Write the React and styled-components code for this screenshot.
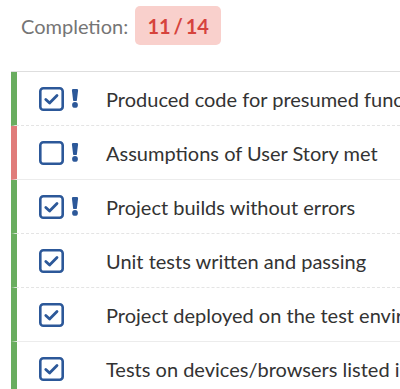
import styled, { createGlobalStyle } from 'styled-components'

const GlobalStyle = createGlobalStyle`
body {
  margin: 0;
  background: #fff;
  font-family: Lato, "Open Sans", sans-serif;
  overflow: hidden;
}
`

const items = [
  { text: 'Produced code for presumed functionality', done: true, flag: true, state: 'ok', dashed: true },
  { text: 'Assumptions of User Story met', done: false, flag: true, state: 'bad', dashed: false },
  { text: 'Project builds without errors', done: true, flag: true, state: 'ok', dashed: true },
  { text: 'Unit tests written and passing', done: true, flag: false, state: 'ok', dashed: true },
  { text: 'Project deployed on the test environment', done: true, flag: false, state: 'ok', dashed: false },
  { text: 'Tests on devices/browsers listed in the story', done: true, flag: false, state: 'ok', dashed: true },
]

function CheckBox({ checked }) {
  return (
    <svg width="25" height="24" viewBox="0 0 25 24">
      <rect x="1.3" y="1.3" width="22.4" height="21.4" rx="3" fill="none" stroke="#2c5899" strokeWidth="2.6" />
      {checked && <path d="M6.8 12.4 L10.6 16 L18 8.4" fill="none" stroke="#2c5899" strokeWidth="2.8" strokeLinecap="round" strokeLinejoin="round" />}
    </svg>
  )
}

function Bang() {
  return (
    <svg width="8" height="19" viewBox="0 0 8 19">
      <path d="M0.9 1.3 Q0.9 0 2.2 0 L5.8 0 Q7.1 0 7.1 1.3 L5.9 11.2 Q5.8 12.1 4.9 12.1 L3.1 12.1 Q2.2 12.1 2.1 11.2 Z" fill="#2c5899" />
      <circle cx="4" cy="15.9" r="2.9" fill="#2c5899" />
    </svg>
  )
}

export default function App() {
  return (
    <>
      <GlobalStyle />
      <Header>
        <Label>Completion:</Label>
        <Badge>11 / 14</Badge>
      </Header>
      <List>
        {items.map((item, i) => (
          <Row key={i} $state={item.state} $dashed={item.dashed}>
            <Icons>
              <CheckBox checked={item.done} />
              {item.flag && <Bang />}
            </Icons>
            <ItemText>{item.text}</ItemText>
          </Row>
        ))}
      </List>
    </>
  )
}

const Header = styled.div`
display: flex;
align-items: center;
gap: 7px;
padding: 6px 0 0 21px;
`

const Label = styled.span`
font-size: 20px;
color: #757575;
`

const Badge = styled.span`
display: inline-flex;
align-items: center;
justify-content: center;
width: 86px;
height: 39px;
border-radius: 5px;
background: #f9d0cc;
color: #d6433c;
font-size: 20px;
font-weight: 700;
word-spacing: -2px;
`

const List = styled.div`
margin: 26px 0 0 11px;
border-top: 1px solid #dedede;
overflow: hidden;
`

const Row = styled.div`
display: flex;
align-items: center;
height: 53px;
border-left: 6px solid ${p => (p.$state === 'bad' ? '#e07c7a' : '#69ad5f')};
border-bottom: 1px ${p => (p.$dashed ? 'dashed #e4e4e4' : 'solid #ececec')};
`

const Icons = styled.div`
display: flex;
align-items: center;
flex-shrink: 0;
gap: 7px;
width: 89px;
padding-left: 22px;
box-sizing: border-box;
`

const ItemText = styled.span`
font-size: 20px;
color: #333;
white-space: nowrap;
`
